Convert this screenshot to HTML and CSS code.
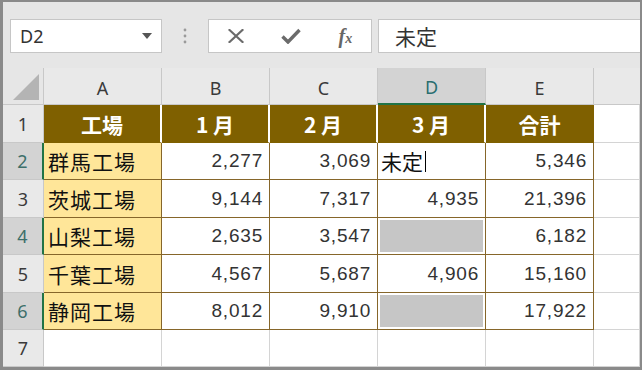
FILE: index.html
```html
<!DOCTYPE html>
<html lang="ja">
<head>
<meta charset="utf-8">
<title>Excel</title>
<link rel="stylesheet" href="styles.css">
</head>
<body>
<div class="frame">
  <div class="toolbar">
    <div class="namebox">
      <span class="ref">D2</span>
      <svg class="dd" width="10" height="6" viewBox="0 0 10 6"><path d="M0 0H10L5 6Z" fill="#555"/></svg>
    </div>
    <div class="sep">
      <svg width="4" height="16" viewBox="0 0 4 16"><circle cx="2" cy="2" r="1.4" fill="#9a9a9a"/><circle cx="2" cy="8" r="1.4" fill="#9a9a9a"/><circle cx="2" cy="14" r="1.4" fill="#9a9a9a"/></svg>
    </div>
    <div class="fxbox">
      <svg width="16" height="14" viewBox="0 0 16 14"><path d="M1.5 1L14.5 13M14.5 1L1.5 13" stroke="#6b6b6b" stroke-width="2.2" stroke-linecap="square"/></svg>
      <svg width="20" height="16" viewBox="0 0 20 16"><path d="M1.5 8.5L7 14L18.5 2" fill="none" stroke="#6b6b6b" stroke-width="3.4" stroke-linejoin="miter"/></svg>
      <span class="fx">f<span class="x">x</span></span>
    </div>
    <div class="input">未定</div>
  </div>
  <div class="sheet">
    <div class="corner"><svg width="26" height="26" viewBox="0 0 26 26"><path d="M26 0V26H0Z" fill="#b4b4b4"/></svg></div>
    <div class="ch">A</div>
    <div class="ch">B</div>
    <div class="ch">C</div>
    <div class="ch on">D</div>
    <div class="ch">E</div>
    <div class="ch last"></div>

    <div class="rh">1</div>
    <div class="th">工場</div>
    <div class="th">1 月</div>
    <div class="th">2 月</div>
    <div class="th">3 月</div>
    <div class="th end">合計</div>
    <div class="blank"></div>

    <div class="rh on">2</div>
    <div class="nm">群馬工場</div>
    <div class="td num">2,277</div>
    <div class="td num">3,069</div>
    <div class="td txt">未定<span class="caret"></span></div>
    <div class="td num end">5,346</div>
    <div class="blank"></div>

    <div class="rh">3</div>
    <div class="nm">茨城工場</div>
    <div class="td num">9,144</div>
    <div class="td num">7,317</div>
    <div class="td num">4,935</div>
    <div class="td num end">21,396</div>
    <div class="blank"></div>

    <div class="rh on">4</div>
    <div class="nm">山梨工場</div>
    <div class="td num">2,635</div>
    <div class="td num">3,547</div>
    <div class="td sel"></div>
    <div class="td num end">6,182</div>
    <div class="blank"></div>

    <div class="rh">5</div>
    <div class="nm">千葉工場</div>
    <div class="td num">4,567</div>
    <div class="td num">5,687</div>
    <div class="td num">4,906</div>
    <div class="td num end">15,160</div>
    <div class="blank"></div>

    <div class="rh on">6</div>
    <div class="nm">静岡工場</div>
    <div class="td num">8,012</div>
    <div class="td num">9,910</div>
    <div class="td sel"></div>
    <div class="td num end">17,922</div>
    <div class="blank"></div>

    <div class="rh">7</div>
    <div class="blank"></div>
    <div class="blank"></div>
    <div class="blank"></div>
    <div class="blank"></div>
    <div class="blank"></div>
    <div class="blank"></div>
  </div>
</div>
</body>
</html>
```
FILE: styles.css
```css
* { box-sizing: border-box; }
html, body { margin: 0; padding: 0; }
body {
  width: 642px;
  height: 370px;
  overflow: hidden;
  font-family: "Noto Sans", "Noto Sans CJK JP", sans-serif;
}
.frame {
  width: 642px;
  height: 370px;
  border: 2px solid #8a8a8a;
  border-left-width: 3px;
  border-bottom-width: 3px;
  background: #e6e6e6;
  display: flex;
  flex-direction: column;
}
.toolbar {
  height: 66px;
  flex: none;
  display: flex;
  align-items: flex-start;
  padding: 17px 0 0 7px;
}
.namebox {
  width: 152px;
  height: 34px;
  background: #fff;
  border: 1px solid #c6c6c6;
  display: flex;
  align-items: center;
  justify-content: space-between;
  padding: 0 9px 0 9px;
}
.ref {
  font-family: "Noto Sans", sans-serif;
  font-size: 18px;
  color: #333;
  line-height: 1;
}
.sep {
  width: 46px;
  height: 34px;
  display: flex;
  align-items: center;
  justify-content: center;
}
.fxbox {
  width: 164px;
  height: 34px;
  background: #fff;
  border: 1px solid #c6c6c6;
  display: flex;
  align-items: center;
  justify-content: space-around;
}
.fx {
  font-family: "Liberation Serif", serif;
  font-style: italic;
  font-weight: 700;
  font-size: 20px;
  color: #666;
  line-height: 1;
}
.fx .x { font-size: 14px; }
.input {
  flex: 1;
  height: 34px;
  margin-left: 6px;
  background: #fff;
  border: 1px solid #c6c6c6;
  border-right: none;
  padding-left: 16px;
  font-family: "Noto Sans CJK JP", sans-serif;
  font-size: 21px;
  line-height: 32px;
  color: #333;
}
.sheet {
  flex: 1;
  display: grid;
  grid-template-columns: 41px 118px 108px 108px 108px 108px 1fr;
  grid-template-rows: 37px 38px 37px 38px 37px 38px 37px 37px;
  background: #fff;
}
.sheet > div {
  border-right: 1px solid #d4d4d4;
  border-bottom: 1px solid #d4d4d4;
  display: flex;
  align-items: center;
  white-space: nowrap;
}
.corner {
  background: #e6e6e6;
  justify-content: flex-end;
  align-items: flex-end !important;
  padding: 0 4px 4px 0;
  border-right-color: #c8c8c8 !important;
  border-bottom-color: #c8c8c8 !important;
}
.ch {
  background: #e9e9e9;
  justify-content: center;
  padding-top: 3px;
  font-size: 18px;
  color: #3a3a3a;
  border-right-color: #c8c8c8 !important;
  border-bottom-color: #c8c8c8 !important;
}
.ch.on {
  background: #d3d3d3;
  border-bottom: 2px solid #217346 !important;
  color: #2a6e70;
}
.ch.last { border-right: none !important; }
.rh {
  background: #e9e9e9;
  justify-content: center;
  font-size: 18px;
  color: #3a3a3a;
  border-right-color: #c8c8c8 !important;
  border-bottom-color: #c8c8c8 !important;
}
.rh.on {
  background: #d3d3d3;
  border-right: 2px solid #217346 !important;
  color: #3d6f6a;
}
.th {
  background: #7f6000;
  color: #fff;
  font-family: "Noto Sans CJK JP", sans-serif;
  font-weight: 700;
  font-size: 21px;
  justify-content: center;
  border-right: 2px solid #fff !important;
  border-bottom: 1px solid #7f6000 !important;
}
.th.end { border-right: 1px solid #7f6000 !important; }
.nm {
  background: #ffe699;
  font-family: "Noto Sans CJK JP", sans-serif;
  font-size: 21px;
  letter-spacing: 1px;
  color: #111;
  padding-left: 4px;
  border-right: 1px solid #86662a !important;
  border-bottom: 1px solid #86662a !important;
}
.td {
  background: #fff;
  border-right: 1px solid #86662a !important;
  border-bottom: 1px solid #86662a !important;
}
.num {
  justify-content: flex-end;
  padding-right: 6px;
  font-family: "Liberation Sans", sans-serif;
  font-size: 19px;
  letter-spacing: 0.8px;
  color: #333;
}
.txt {
  font-family: "Noto Sans CJK JP", sans-serif;
  font-size: 21px;
  color: #111;
  padding-left: 3px;
}
.caret {
  display: inline-block;
  width: 1px;
  height: 21px;
  background: #000;
  margin-left: 2px;
}
.sel {
  background: #c6c6c6;
  box-shadow: inset 0 0 0 2px #fff;
}
```
